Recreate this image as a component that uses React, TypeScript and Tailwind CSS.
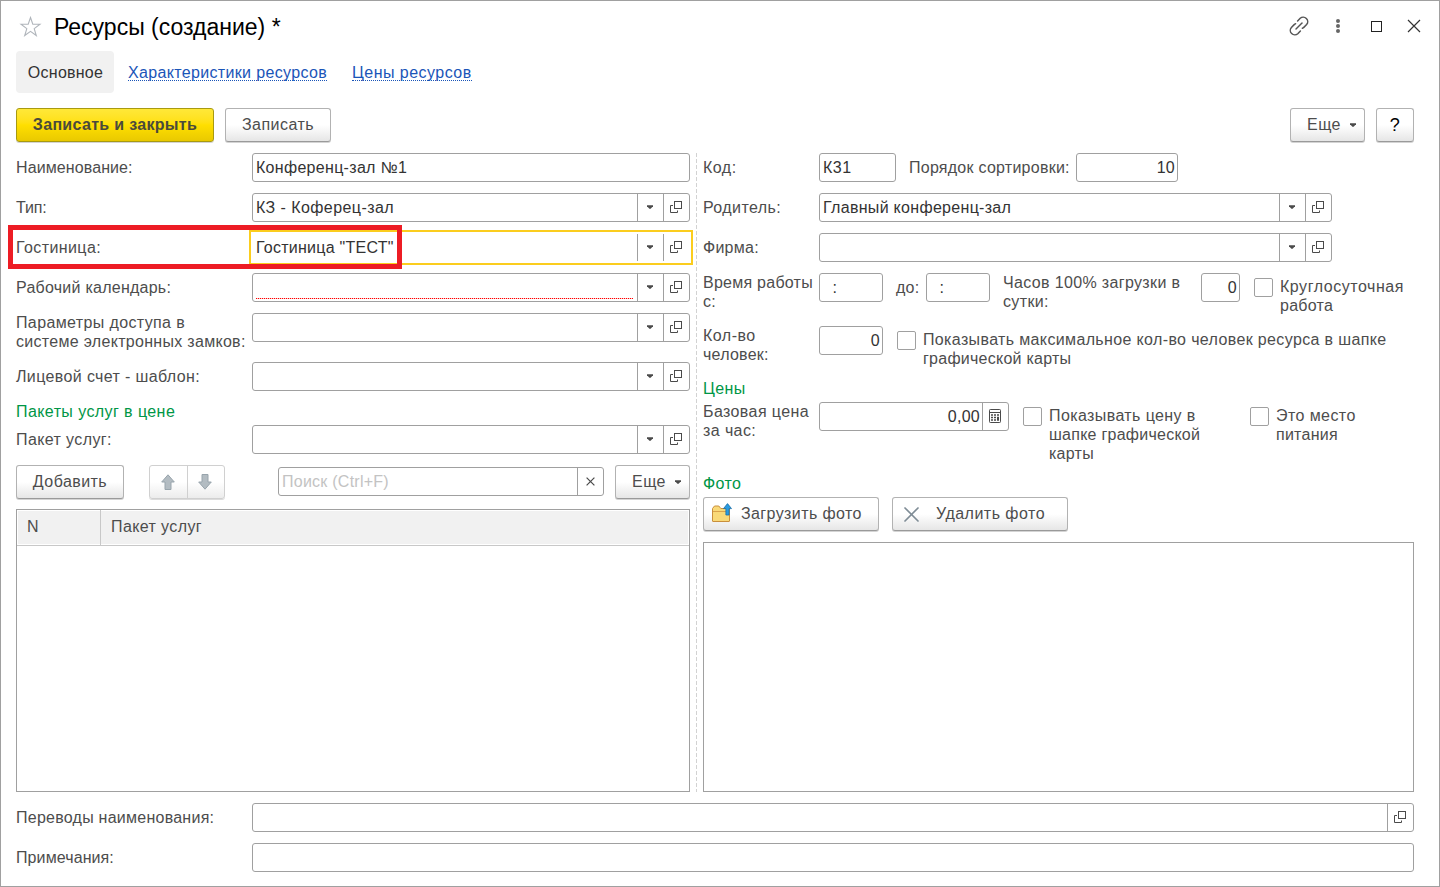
import type { ReactNode } from "react";
import clsx from "clsx";

const OpenIcon = () => (
  <svg width="12" height="12" viewBox="0 0 12 12" fill="none" stroke="#4a4a4a">
    <rect x="4.5" y="0.5" width="7" height="7" />
    <path d="M3 4.5H0.5v7h7V9.5" />
  </svg>
);

const Caret = () => (
  <svg width="6" height="4" viewBox="0 0 6 4" fill="#4a4a4a">
    <path d="M0 0.3h6v0.9L3.6 3.8H2.4L0 1.2z" />
  </svg>
);

const ClearIcon = () => (
  <svg width="9" height="9" viewBox="0 0 9 9" stroke="#4a4a4a" strokeWidth="1.2">
    <path d="M0.6 0.6l7.8 7.8M8.4 0.6L0.6 8.4" />
  </svg>
);

const CalcIcon = () => (
  <svg width="12" height="14" viewBox="0 0 12 14" fill="none" stroke="#4a4a4a">
    <rect x="0.5" y="0.5" width="11" height="13" rx="0.8" />
    <path d="M1 3.5h10" />
    <path
      d="M2 6h2M5 6h2M8 6h2M2 8.5h2M5 8.5h2M2 11h2M5 11h2"
      strokeWidth="1.4"
    />
    <path d="M9 7.8v4" strokeWidth="2" />
  </svg>
);

const StarIcon = () => (
  <svg width="23" height="21" viewBox="0 0 23 21" fill="none" stroke="#b0b5bb" strokeWidth="1.1">
    <path d="M11.5 1.5l2.3 6.6 7.2.2-5.8 4.3 2.1 6.9-5.8-4.1-5.8 4.1 2.1-6.9L2 8.3l7.2-.2z" />
  </svg>
);

const LinkIcon = () => (
  <svg
    width="20"
    height="20"
    viewBox="0 0 20 20"
    fill="none"
    stroke="#555"
    strokeWidth="1.5"
    strokeLinecap="round"
  >
    <path d="M7 13l6-6" />
    <path d="M8.6 5l2.6-2.7a4.5 4.5 0 0 1 6.4 6.3l-2.8 2.8a3 3 0 0 1-1.4.8" />
    <path d="M11.4 15l-2.6 2.7a4.5 4.5 0 0 1-6.4-6.3l2.8-2.8a3 3 0 0 1 1.4-.8" />
  </svg>
);

const FolderIcon = () => (
  <svg width="21" height="20" viewBox="0 0 21 20" fill="none">
    <path
      d="M1.5 18V5.5L3.5 3h4.3l2 2.5h8.7V18q0 .5-.5.5H2q-.5 0-.5-.5z"
      fill="#f9d978"
      stroke="#c98f3c"
    />
    <path d="M2 8.5h16" stroke="#d9a24c" />
    <path
      d="M16.5 .6l4 5h-2.4v6.4h-3.2V5.6h-2.4z"
      fill="#2a9be0"
      stroke="#1b6fa8"
      strokeWidth="0.8"
    />
  </svg>
);

const DeleteIcon = () => (
  <svg width="15" height="15" viewBox="0 0 15 15" fill="none">
    <path
      d="M1 1l13 13M14 1L1 14"
      stroke="#7f8c96"
      strokeWidth="1.7"
      strokeLinecap="round"
    />
  </svg>
);

const ArrowIcon = ({ down }: { down?: boolean }) => (
  <svg
    className={clsx(down && "rotate-180")}
    width="14"
    height="16"
    viewBox="0 0 14 16"
    fill="#b3bcc2"
    stroke="#98a4ac"
  >
    <path d="M7 .8L13.3 8H10v7.5H4V8H.7z" strokeLinejoin="round" />
  </svg>
);

const Cell = ({ children }: { children: ReactNode }) => (
  <div className="flex h-full w-[26px] shrink-0 items-center justify-center border-l border-[#a0a0a0] pr-px pb-px">
    {children}
  </div>
);

const Field = ({
  value,
  className,
  right,
  select,
  open,
  required,
  children,
}: {
  value?: string;
  className?: string;
  right?: boolean;
  select?: boolean;
  open?: boolean;
  required?: boolean;
  children?: ReactNode;
}) => (
  <div
    className={clsx(
      "flex h-[29px] shrink-0 items-center border bg-white text-[#333]",
      className,
    )}
  >
    <div
      className={clsx(
        "flex h-full min-w-0 grow items-center whitespace-pre pl-[3px]",
        right && "justify-end pr-0.5",
      )}
    >
      {required ? (
        <div className="mt-[22px] mr-1 h-px grow bg-[repeating-linear-gradient(to_right,#ff0000_0_1px,#ffc8c8_1px_2px)]" />
      ) : (
        value
      )}
    </div>
    {children}
    {select && (
      <Cell>
        <Caret />
      </Cell>
    )}
    {(select || open) && (
      <Cell>
        <OpenIcon />
      </Cell>
    )}
  </div>
);

const box = "rounded-[3px] border-[#a0a0a0]";

const Row = ({
  label,
  className,
  children,
}: {
  label: ReactNode;
  className?: string;
  children: ReactNode;
}) => (
  <div className="flex items-start">
    <div
      className={clsx(
        "flex min-h-[29px] w-[236px] shrink-0 items-center whitespace-nowrap",
        className,
      )}
    >
      {label}
    </div>
    {children}
  </div>
);

const Button = ({
  className,
  children,
}: {
  className?: string;
  children: ReactNode;
}) => (
  <button
    className={clsx(
      "flex h-[34px] shrink-0 items-center justify-center rounded-[3px] border border-[#b2b2b2] border-b-[#9a9a9a] bg-linear-to-b from-white from-50% to-[#e6e6e6] pb-0.5 shadow-[0_1px_0_#d4d4d4]",
      className,
    )}
  >
    {children}
  </button>
);

const MoreButton = () => (
  <Button className="ml-[11px] w-[75px] gap-[9px] pl-2 tracking-[0.4px]">
    Еще
    <span className="mt-0.5">
      <Caret />
    </span>
  </Button>
);

const Check = ({ className, children }: { className?: string; children: ReactNode }) => (
  <label className={clsx("flex shrink-0 gap-[7px] whitespace-nowrap", className)}>
    <span className="mt-[5px] size-[19px] shrink-0 rounded-[2px] border border-[#a0a0a0]" />
    <span className="pt-1">{children}</span>
  </label>
);

const Section = ({ children }: { children: ReactNode }) => (
  <div className="-mb-[7px] h-[19px] tracking-[0.42px] text-[#009646]">{children}</div>
);

const LeftColumn = () => (
  <div className="flex w-[674px] shrink-0 flex-col gap-[11px]">
    <Row label="Наименование:" className="tracking-[0.1px]">
      <Field className={clsx(box, "w-[438px] tracking-[0.3px]")} value="Конференц-зал №1" />
    </Row>
    <Row label="Тип:" className="tracking-[-0.1px]">
      <Field className={clsx(box, "w-[438px] tracking-[0.43px]")} value="КЗ - Коферец-зал" select />
    </Row>
    <div className="relative">
      <Row label="Гостиница:" className="tracking-[0.4px]">
        <Field
          className="w-[438px] border-transparent outline-2 outline-offset-1 outline-[#fbcd1e]"
          value={'Гостиница "ТЕСТ"'}
          select
        />
      </Row>
      <div className="absolute -top-2 -left-2 h-11 w-[394px] border-[5px] border-[#ed1c24]" />
    </div>
    <Row label="Рабочий календарь:">
      <Field className={clsx(box, "w-[438px]")} select required />
    </Row>
    <Row
      className="tracking-[0.3px]"
      label={
        <span>
          <span className="tracking-[0.37px]">Параметры доступа в</span>
          <br />
          системе электронных замков:
        </span>
      }
    >
      <Field className={clsx(box, "w-[438px]")} select />
    </Row>
    <Row label="Лицевой счет - шаблон:" className="tracking-[0.37px]">
      <Field className={clsx(box, "w-[438px]")} select />
    </Row>
    <Section>Пакеты услуг в цене</Section>
    <Row label="Пакет услуг:" className="tracking-[0.4px]">
      <Field className={clsx(box, "w-[438px]")} select />
    </Row>
    <div className="flex items-start">
      <Button className="w-[108px] tracking-[0.45px]">Добавить</Button>
      <div className="ml-[25px] flex h-[34px] w-[76px] rounded-[3px] border border-[#d0d0d0] bg-linear-to-b from-white from-50% to-[#ececec] shadow-[0_1px_0_#dcdcdc]">
        <div className="flex w-[38px] items-center justify-center border-r border-[#d0d0d0] pr-px">
          <ArrowIcon />
        </div>
        <div className="flex w-[34px] items-center justify-center">
          <ArrowIcon down />
        </div>
      </div>
      <Field
        className={clsx(box, "mt-0.5 ml-[53px] w-[326px] text-[#c3c3c3]!")}
        value="Поиск (Ctrl+F)"
      >
        <Cell>
          <ClearIcon />
        </Cell>
      </Field>
      <MoreButton />
    </div>
    <div className="-mt-px flex grow flex-col border border-[#a0a0a0]">
      <div className="flex h-9 border-b border-[#c8c8c8] bg-[#f1f1f1] ring-1 ring-white ring-inset">
        <div className="flex w-[84px] items-center border-r border-[#c8c8c8] pb-0.5 pl-[10px]">
          N
        </div>
        <div className="flex items-center pb-0.5 pl-[10px] tracking-[0.4px]">Пакет услуг</div>
      </div>
    </div>
  </div>
);

const RightColumn = () => (
  <div className="flex w-[711px] shrink-0 flex-col gap-[11px] whitespace-nowrap">
    <div className="flex items-center">
      <div className="w-[116px] tracking-[0.5px]">Код:</div>
      <Field className={clsx(box, "w-[77px] tracking-[0.5px]")} value="К31" />
      <div className="ml-[13px] w-[167px]">Порядок сортировки:</div>
      <Field className={clsx(box, "w-[102px]")} value="10" right />
    </div>
    <div className="flex items-center">
      <div className="w-[116px] tracking-[0.4px]">Родитель:</div>
      <Field
        className={clsx(box, "w-[513px] tracking-[0.3px]")}
        value="Главный конференц-зал"
        select
      />
    </div>
    <div className="flex items-center">
      <div className="w-[116px]">Фирма:</div>
      <Field className={clsx(box, "w-[513px]")} select />
    </div>
    <div className="flex items-start">
      <div className="w-[116px]">
        Время работы
        <br />
        с:
      </div>
      <Field className={clsx(box, "w-16")} value="  :" />
      <div className="ml-[13px] w-[30px] pt-[5px]">до:</div>
      <Field className={clsx(box, "w-16")} value="  :" />
      <div className="ml-[13px] w-[198px] tracking-[0.35px]">
        Часов 100% загрузки в<br />
        сутки:
      </div>
      <Field className={clsx(box, "w-[39px]")} value="0" right />
      <Check className="ml-[14px] tracking-[0.54px]">
        Круглосуточная
        <br />
        <span className="tracking-[0.25px]">работа</span>
      </Check>
    </div>
    <div className="flex items-start">
      <div className="w-[116px]">
        <span className="tracking-[0.5px]">Кол-во</span>
        <br />
        человек:
      </div>
      <Field className={clsx(box, "w-16")} value="0" right />
      <Check className="ml-[14px] tracking-[0.36px]">
        Показывать максимальное кол-во человек ресурса в шапке
        <br />
        <span className="tracking-[0.25px]">графической карты</span>
      </Check>
    </div>
    <Section>Цены</Section>
    <div className="flex items-start">
      <div className="w-[116px] tracking-[0.4px]">
        Базовая цена
        <br />
        за час:
      </div>
      <Field className={clsx(box, "w-[190px]")} value="0,00" right>
        <Cell>
          <CalcIcon />
        </Cell>
      </Field>
      <Check className="ml-[14px] w-[227px]">
        <span className="tracking-[0.4px]">Показывать цену в</span>
        <br />
        шапке графической
        <br />
        карты
      </Check>
      <Check className="tracking-[0.42px]">
        Это место
        <br />
        <span className="tracking-[0.25px]">питания</span>
      </Check>
    </div>
    <Section>Фото</Section>
    <div className="flex gap-[13px]">
      <Button className="w-44 justify-start! gap-[9px] pl-[7px] tracking-[0.4px]">
        <FolderIcon />
        Загрузить фото
      </Button>
      <Button className="w-44 justify-start! gap-[17px] pl-[11px] tracking-[0.48px]">
        <span className="mt-0.5">
          <DeleteIcon />
        </span>
        Удалить фото
      </Button>
    </div>
    <div className="grow border border-[#a0a0a0]" />
  </div>
);

export default function App() {
  return (
    <div className="flex h-[887px] w-[1440px] flex-col overflow-hidden border border-[#a0a0a0] bg-white pl-[15px] font-['Liberation_Sans',Arial,sans-serif] text-[16px] leading-[19px] tracking-[0.25px] text-[#4d4d4d]">
      <div className="flex h-[50px] shrink-0 items-center pr-[18px]">
        <div className="ml-[3px]">
          <StarIcon />
        </div>
        <h1 className="mt-0.5 ml-3 text-[23px] leading-7 tracking-normal text-black">
          Ресурсы (создание) *
        </h1>
        <div className="ml-auto flex items-center">
          <LinkIcon />
          <svg className="ml-[26px]" width="6" height="16" viewBox="0 0 6 16" fill="#666">
            <circle cx="3" cy="3" r="2" />
            <circle cx="3" cy="8" r="2" />
            <circle cx="3" cy="13" r="2" />
          </svg>
          <div className="ml-[30px] size-[11px] border border-[#222]" />
          <svg
            className="ml-[25px]"
            width="14"
            height="14"
            viewBox="0 0 14 14"
            stroke="#333"
            strokeWidth="1.2"
          >
            <path d="M1 1l12 12M13 1L1 13" />
          </svg>
        </div>
      </div>

      <nav className="flex h-[42px] shrink-0 items-center">
        <div className="flex h-full w-[98px] items-center justify-center rounded-[4px] bg-[#f1f1f1] pl-px text-[#333]">
          Основное
        </div>
        <a className="ml-[14px] h-[18px] w-[199px] border-b border-dotted border-[#1a55b8] tracking-[0.34px] whitespace-nowrap text-[#1a55b8]">
          Характеристики ресурсов
        </a>
        <a className="ml-[25px] h-[18px] w-[120px] border-b border-dotted border-[#1a55b8] tracking-[0.46px] whitespace-nowrap text-[#1a55b8]">
          Цены ресурсов
        </a>
      </nav>

      <div className="mt-[15px] flex shrink-0 pr-[25px]">
        <button className="flex h-[34px] w-[198px] items-center justify-center rounded-[3px] border border-[#a89a10] bg-linear-to-b from-[#ffe838] via-[#ffdf00] to-[#e9c900] pb-0.5 font-bold tracking-[0.32px] text-[#4a4a3c] shadow-[0_1px_0_#d4d4d4]">
          Записать и закрыть
        </button>
        <Button className="mr-auto ml-[11px] w-[106px] tracking-[0.45px]">Записать</Button>
        <MoreButton />
        <Button className="ml-[11px] w-[38px] pb-0! text-[18px] text-black">?</Button>
      </div>

      <div className="mt-[11px] flex h-[639px] shrink-0">
        <LeftColumn />
        <div className="mr-[6px] ml-[6px] w-px bg-[repeating-linear-gradient(to_bottom,#d2d2d2_0_4px,transparent_4px_6px)]" />
        <RightColumn />
      </div>

      <div className="mt-[11px] flex flex-col gap-[11px]">
        <Row label="Переводы наименования:">
          <Field className={clsx(box, "w-[1162px]")} open />
        </Row>
        <Row label="Примечания:" className="tracking-[0.1px]">
          <Field className={clsx(box, "w-[1162px]")} />
        </Row>
      </div>
    </div>
  );
}
